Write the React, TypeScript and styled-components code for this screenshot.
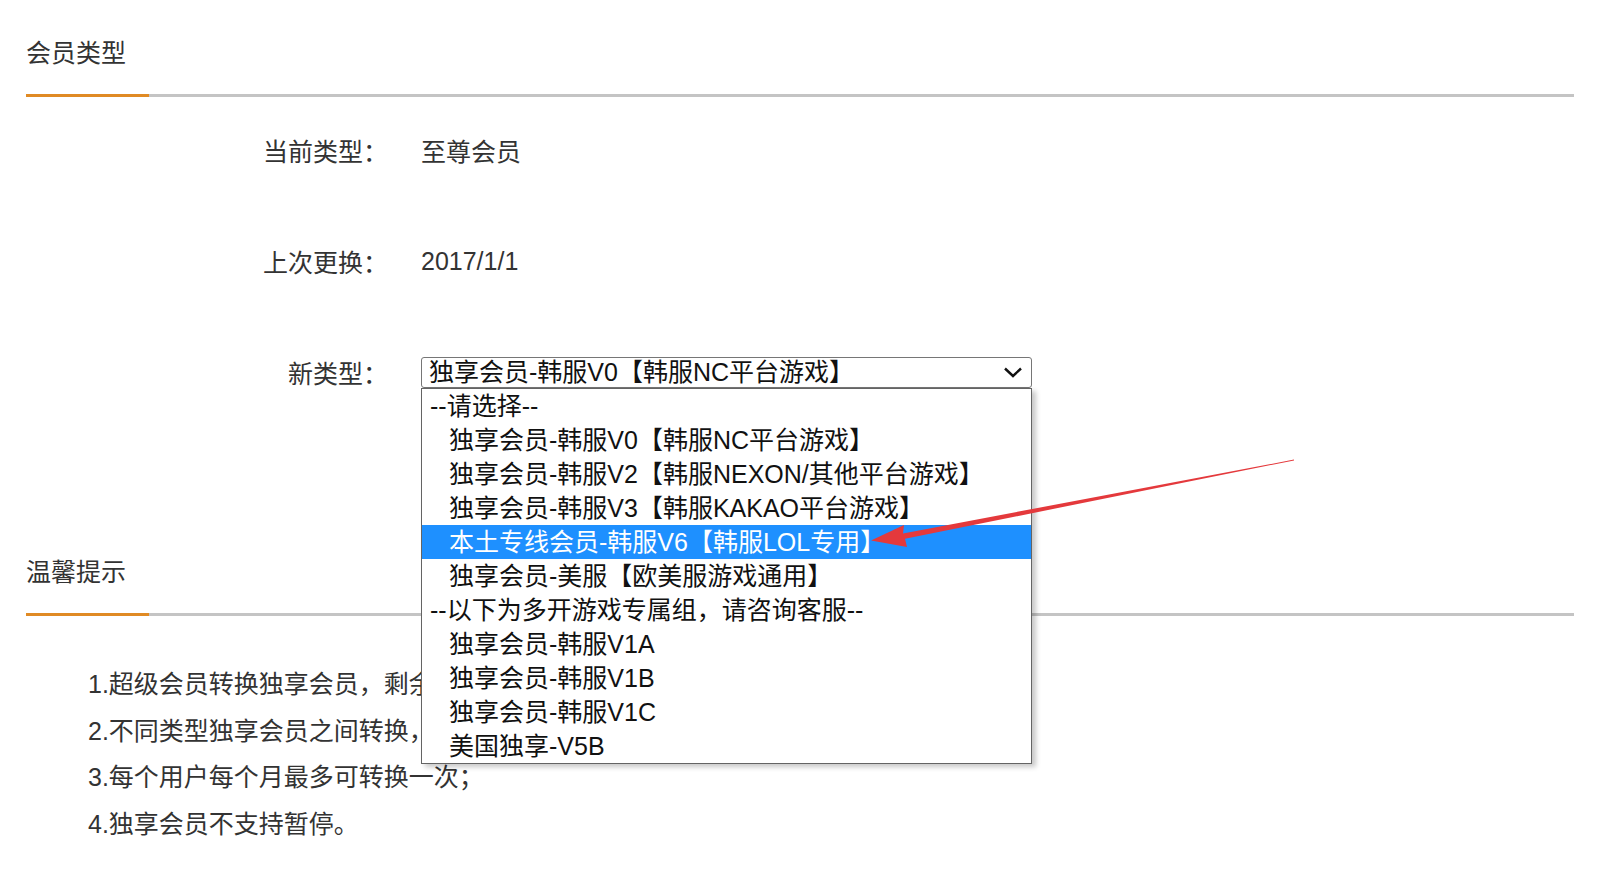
import React from 'react'
import styled, {createGlobalStyle} from 'styled-components'

const GlobalStyle = createGlobalStyle`
  html, body {
    margin: 0;
    padding: 0;
    background: #fff;
  }
  body {
    font-family: "Liberation Sans", "Noto Sans CJK SC", sans-serif;
    color: #333;
  }
`

const options = [
  {label: '--请选择--', group: true},
  {label: '独享会员-韩服V0【韩服NC平台游戏】'},
  {label: '独享会员-韩服V2【韩服NEXON/其他平台游戏】'},
  {label: '独享会员-韩服V3【韩服KAKAO平台游戏】'},
  {label: '本土专线会员-韩服V6【韩服LOL专用】', active: true},
  {label: '独享会员-美服【欧美服游戏通用】'},
  {label: '--以下为多开游戏专属组，请咨询客服--', group: true},
  {label: '独享会员-韩服V1A'},
  {label: '独享会员-韩服V1B'},
  {label: '独享会员-韩服V1C'},
  {label: '美国独享-V5B'},
]

const tips = [
  '1.超级会员转换独享会员，剩余时长按比例折算；',
  '2.不同类型独享会员之间转换，剩余时长按比例折算；',
  '3.每个用户每个月最多可转换一次；',
  '4.独享会员不支持暂停。',
]

export default function App(): JSX.Element {
  return (
    <Page>
      <GlobalStyle />

      <SectionTitle>会员类型</SectionTitle>
      <Rule />

      <Form>
        <Row>
          <Label>当前类型：</Label>
          <Value>至尊会员</Value>
        </Row>
        <Row>
          <Label>上次更换：</Label>
          <Value>2017/1/1</Value>
        </Row>
        <Row>
          <Label>新类型：</Label>
          <SelectWrap>
            <SelectBox>
              <span>独享会员-韩服V0【韩服NC平台游戏】</span>
              <svg width="22" height="14" viewBox="0 0 22 14">
                <polyline
                  points="3,3.5 11,11 19,3.5"
                  fill="none"
                  stroke="#111"
                  strokeWidth="2.4"
                />
              </svg>
            </SelectBox>
            <DropList>
              {options.map((o) => (
                <Option key={o.label} $group={o.group} $active={o.active}>
                  {o.label}
                </Option>
              ))}
            </DropList>
          </SelectWrap>
        </Row>
        <ButtonRow>
          <SubmitButton aria-label="确认更换" />
        </ButtonRow>
      </Form>

      <SectionTitle $second>温馨提示</SectionTitle>
      <Rule />

      <Tips>
        {tips.map((t) => (
          <Tip key={t}>{t}</Tip>
        ))}
      </Tips>

      <Arrow width="1597" height="885" viewBox="0 0 1597 885">
        <polygon
          points="1294,459.6 903,533.4 904,525 871,540.5 907,547 905,538.8 1294,460.4"
          fill="#e4393c"
        />
      </Arrow>
    </Page>
  )
}

const Page = styled.div`
  position: relative;
  width: 1597px;
  height: 885px;
  padding: 0 23px 0 26px;
  box-sizing: border-box;
  overflow: hidden;
`

const SectionTitle = styled.div<{$second?: boolean}>`
  padding-top: ${(p) => (p.$second ? '60px' : '37px')};
  margin-bottom: 25px;
  font-size: 25px;
  line-height: 32px;
  color: #333;
`

const Rule = styled.div`
  height: 3px;
  background: linear-gradient(to right, #e08a24 0, #e08a24 123px, #c4c4c4 123px);
`

const Form = styled.div`
  display: flex;
  flex-direction: column;
  gap: 71px;
  margin-top: 33px;
`

const Row = styled.div`
  display: flex;
  align-items: center;
  height: 40px;
`

const Label = styled.div`
  width: 362px;
  text-align: right;
  font-size: 25px;
  color: #333;
  font-family: "Noto Sans CJK SC", sans-serif;
`

const Value = styled.div`
  margin-left: 33px;
  font-size: 25px;
  color: #333;
`

const SelectWrap = styled.div`
  position: relative;
  margin-left: 33px;
  width: 611px;
  z-index: 2;
`

const SelectBox = styled.div`
  display: flex;
  align-items: center;
  justify-content: space-between;
  height: 31px;
  box-sizing: border-box;
  padding: 0 7px 0 7px;
  border: 1px solid #767676;
  border-radius: 3px;
  font-size: 25px;
  line-height: 29px;
  color: #111;
  background: #fff;
`

const DropList = styled.div`
  position: absolute;
  top: 31px;
  left: 0;
  width: 611px;
  box-sizing: border-box;
  border: 1px solid #646464;
  background: #fff;
  box-shadow: 4px 3px 5px rgba(0, 0, 0, 0.22);
`

const Option = styled.div<{$group?: boolean; $active?: boolean}>`
  height: 34px;
  line-height: 34px;
  padding-left: ${(p) => (p.$group ? '8px' : '27px')};
  font-size: 25px;
  white-space: nowrap;
  color: ${(p) => (p.$active ? '#fff' : '#111')};
  background: ${(p) => (p.$active ? '#1e90ff' : 'transparent')};
`

const ButtonRow = styled.div`
  margin-top: -34px;
  padding-left: 395px;
`

const SubmitButton = styled.button`
  display: block;
  width: 170px;
  height: 67px;
  border: 2px solid #4a8fc4;
  border-radius: 3px;
  background: #fff;
`

const Tips = styled.div`
  display: flex;
  flex-direction: column;
  margin-top: 45px;
  padding-left: 62px;
`

const Tip = styled.div`
  font-size: 25px;
  line-height: 46.5px;
  color: #333;
`

const Arrow = styled.svg`
  position: absolute;
  top: 0;
  left: 0;
  pointer-events: none;
  z-index: 3;
`
